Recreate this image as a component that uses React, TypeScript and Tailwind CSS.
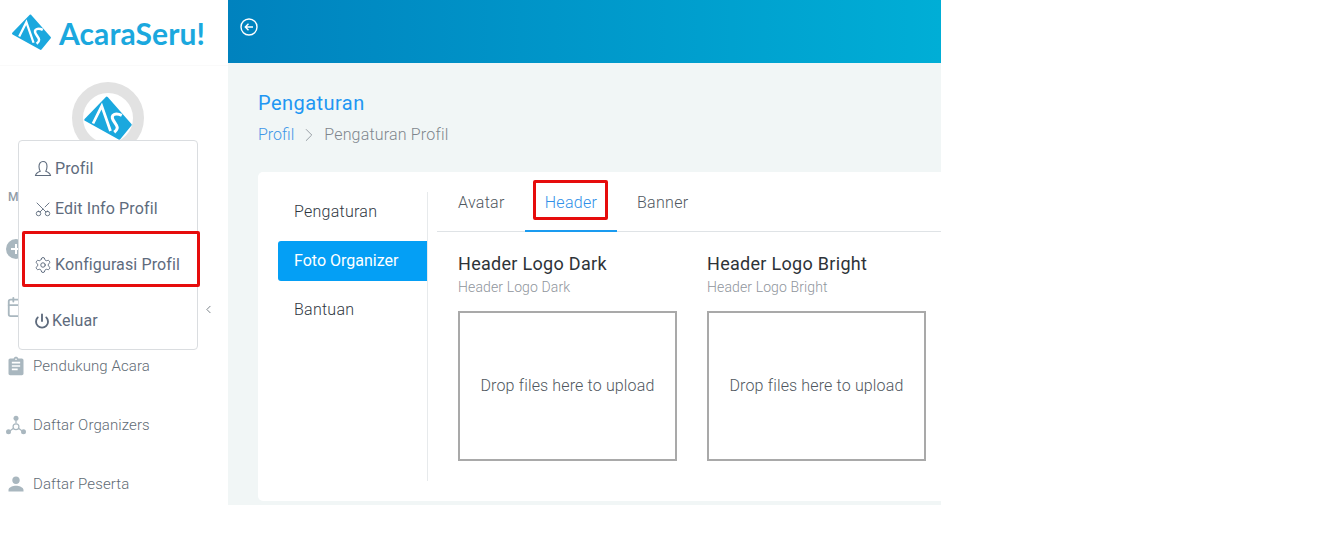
import { CalendarPlus, ChevronLeft, ChevronRight, Power, Settings, Scissors } from "lucide-react";

function LogoMark({ className }: { className: string }) {
  return (
    <svg viewBox="0 0 40 36" className={className}>
      <path d="M19 1.500 L38 23 L29 34 L2 19 Z" fill="#1ba8de" stroke="#1ba8de" strokeWidth="2" strokeLinejoin="round" />
      <path d="M8 22 L15 8 L22 28" fill="none" stroke="#fff" strokeWidth="2.2" />
      <path d="M31 15.500 C26 13 22 15 24 19 C26 23 30 25 25 29" fill="none" stroke="#fff" strokeWidth="2.4" />
    </svg>
  );
}

function ClipboardIcon() {
  return (
    <svg viewBox="0 0 24 24" className="w-[20px] h-[20px]" fill="#a9b7bf">
      <path d="M19 3h-4.200C14.400 1.800 13.300 1 12 1s-2.400.8-2.800 2H5c-1.100 0-2 .9-2 2v16c0 1.100.9 2 2 2h14c1.100 0 2-.9 2-2V5c0-1.100-.9-2-2-2zm-7 0c.6 0 1 .4 1 1s-.4 1-1 1-1-.4-1-1 .4-1 1-1zm2 14H7v-2h7v2zm3-4H7v-2h10v2zm0-4H7V7h10v2z" />
    </svg>
  );
}

function NetworkIcon() {
  return (
    <svg viewBox="0 0 24 24" className="w-[20px] h-[20px]" fill="none" stroke="#a9b7bf">
      <circle cx="12" cy="4" r="3" fill="#a9b7bf" stroke="none" />
      <circle cx="3" cy="20" r="3" fill="#a9b7bf" stroke="none" />
      <circle cx="21" cy="20" r="3" fill="#a9b7bf" stroke="none" />
      <circle cx="12" cy="14" r="3.500" strokeWidth="1.500" />
      <path d="M12 6v4M5 19l4-3M19 19l-4-3" strokeWidth="1.500" />
    </svg>
  );
}

function PersonIcon() {
  return (
    <svg viewBox="0 0 24 24" className="w-[20px] h-[20px]" fill="#a9b7bf">
      <path d="M12 12c2.700 0 4.500-1.900 4.500-4.500S14.700 3 12 3 7.500 4.900 7.500 7.500 9.300 12 12 12zm0 2c-3.300 0-9 1.700-9 5v2h18v-2c0-3.300-5.700-5-9-5z" />
    </svg>
  );
}

function PlusCircleIcon() {
  return (
    <svg viewBox="0 0 24 24" className="w-[24px] h-[24px]" fill="#a9b7bf">
      <path d="M12 2a10 10 0 1 0 0 20 10 10 0 0 0 0-20zm5 11h-4v4h-2v-4H7v-2h4V7h2v4h4v2z" />
    </svg>
  );
}

function UserOutlineIcon() {
  return (
    <svg viewBox="0 0 18 18" className="w-[18px] h-[18px] shrink-0" fill="none" stroke="currentColor" strokeWidth="1.100">
      <path d="M6.200 11.200 C5.400 9.800 5 8.300 5 6.500 C5 3.500 6.600 1.500 9 1.500 C11.400 1.500 13 3.500 13 6.500 C13 8.300 12.600 9.800 11.800 11.200 C13.700 11.900 16 12.900 16.500 15.500 L1.500 15.500 C2 12.900 4.300 11.900 6.200 11.200 Z" />
    </svg>
  );
}

const navItems = [
  { label: "Pendukung Acara", icon: <ClipboardIcon /> },
  { label: "Daftar Organizers", icon: <NetworkIcon /> },
  { label: "Daftar Peserta", icon: <PersonIcon /> },
];

function Sidebar() {
  return (
    <aside className="w-[228px] shrink-0 bg-white relative">
      <div className="h-[66px] flex items-center pl-[11px] gap-[7px] border-b border-[#fafafa]">
        <LogoMark className="w-[41px] h-[37px] shrink-0" />
        <span className="text-[#1ba8de] text-[30px] font-bold font-['Lato',sans-serif] leading-none tracking-[0.1px]">
          AcaraSeru!
        </span>
      </div>
      <div className="flex pl-[72px] pt-[16px]">
        <div className="w-[72px] h-[72px] rounded-full border-[11px] border-[#e2e2e2] bg-white flex items-center justify-center">
          <LogoMark className="w-[50px] h-[45px] shrink-0" />
        </div>
      </div>
      <div className="pl-[8px] pt-[34px] h-[58px] text-[12px] font-medium text-[#8f9ba6]">Menu</div>
      <div className="h-[59px] pl-[4px] pt-[14px] flex items-center"><PlusCircleIcon /></div>
      <div className="h-[59px] pl-[6px] pt-[13px] flex items-center text-[#a9b7bf]"><CalendarPlus size={22} /></div>
      {navItems.map((item) => (
        <div key={item.label} className="h-[59px] pt-[13px] flex items-center pl-[6px] gap-[7px]">
          {item.icon}
          <span className="text-[15px] font-light text-[#5f6b75] tracking-[0.1px]">{item.label}</span>
        </div>
      ))}
      <ChevronLeft size={13} strokeWidth={1.5} className="absolute left-[202px] top-[303px] text-[#5f6870]" />
    </aside>
  );
}

function ProfileMenu() {
  return (
    <div className="absolute left-[18px] top-[140px] w-[180px] h-[210px] bg-white border border-[#dadde0] rounded-[4px] text-[16px] text-[#5e6b7d] tracking-[0.12px] z-10">
      <div className="absolute left-[15px] top-[16px] flex items-center gap-[3px]">
        <UserOutlineIcon />
        <span>Profil</span>
      </div>
      <div className="absolute left-[15px] top-[56px] flex items-center gap-[3px]">
        <Scissors size={18} strokeWidth={1.2} className="-rotate-90 shrink-0" />
        <span>Edit Info Profil</span>
      </div>
      <div className="absolute left-[15px] top-[112px] flex items-center gap-[3px]">
        <Settings size={18} strokeWidth={1.3} className="shrink-0" />
        <span>Konfigurasi Profil</span>
      </div>
      <div className="absolute left-[15px] top-[168px] flex items-center gap-[2px]">
        <Power size={16} strokeWidth={2.8} className="shrink-0" />
        <span>Keluar</span>
      </div>
    </div>
  );
}

function DropZone({ title }: { title: string }) {
  return (
    <div className="w-[219px] shrink-0">
      <div className="pt-[1px] text-[18px] leading-[24px] text-[#2e3338] tracking-[0.3px]">{title}</div>
      <div className="text-[14px] leading-[20px] mt-[1px] font-light text-[#8f959c] tracking-[0.12px]">{title}</div>
      <div className="mt-[14px] h-[150px] border-2 border-[#a9a9a9] flex items-center justify-center text-[16px] font-light text-[#4f5760] tracking-[0.15px]">
        Drop files here to upload
      </div>
    </div>
  );
}

export default function App() {
  return (
    <div className="w-[941px] h-[505px] flex overflow-hidden bg-white font-['Roboto',sans-serif] relative">
      <Sidebar />
      <ProfileMenu />
      <main className="flex-1 min-w-0 bg-[#f1f6f6]">
        <header className="h-[63px] bg-gradient-to-r from-[#0082be] to-[#00aed6] flex items-start pl-[12px] pt-[18px]">
          <svg viewBox="0 0 18 18" className="w-[18px] h-[18px]" fill="none" stroke="#fff" strokeWidth="1.400">
            <circle cx="9" cy="9" r="8" />
            <path d="M13 9H5.500M8.500 5.800 5.300 9l3.200 3.200" />
          </svg>
        </header>
        <div className="pl-[30px] pt-[27px]">
          <h1 className="text-[20px] leading-[26px] text-[#2196f3] tracking-[0.45px]">Pengaturan</h1>
          <div className="flex items-center mt-[7px] text-[16px] leading-[24px]">
            <span className="text-[#3f97e8] font-light">Profil</span>
            <ChevronRight size={22} strokeWidth={1} className="mx-[4px] text-[#8f979e]" />
            <span className="text-[#7f868d] font-light tracking-[0.18px]">Pengaturan Profil</span>
          </div>
          <section className="mt-[25px] w-[720px] h-[329px] bg-white rounded-[5px] flex pt-[20px] pl-[20px]">
            <div className="w-[150px] shrink-0 h-[289px] border-r border-[#e7eaec] text-[16px] font-light text-[#2f373f] tracking-[0.25px]">
              <div className="h-[40px] flex items-center pl-[16px]">Pengaturan</div>
              <div className="h-[40px] mt-[9px] flex items-center pl-[16px] bg-[#049ff5] text-white font-normal tracking-normal rounded-l-[3px]">Foto Organizer</div>
              <div className="h-[40px] mt-[9px] flex items-center pl-[16px]">Bantuan</div>
            </div>
            <div className="pl-[9px] flex-1 min-w-0">
              <div className="h-[40px] border-b border-[#dfe3e6] flex text-[16px] font-light text-[#4f5760] tracking-[0.3px] mr-[-20px]">
                <div className="w-[88px] pl-[21px] pt-[1px] leading-[20px]">Avatar</div>
                <div className="w-[92px] h-[40px] pt-[1px] border-b-2 border-[#1a9bf0] text-center text-[#2f8fe8] leading-[20px]">Header</div>
                <div className="pl-[20px] pt-[1px] leading-[20px]">Banner</div>
              </div>
              <div className="pl-[21px] pt-[19px] flex gap-[30px]">
                <DropZone title="Header Logo Dark" />
                <DropZone title="Header Logo Bright" />
              </div>
            </div>
          </section>
        </div>
      </main>
      <div className="absolute left-[22px] top-[231px] w-[178px] h-[56px] border-[3px] border-[#e60c0c] rounded-[2px] z-20" />
      <div className="absolute left-[533px] top-[180px] w-[75px] h-[40px] border-[3px] border-[#e60c0c] rounded-[2px] z-20" />
    </div>
  );
}
